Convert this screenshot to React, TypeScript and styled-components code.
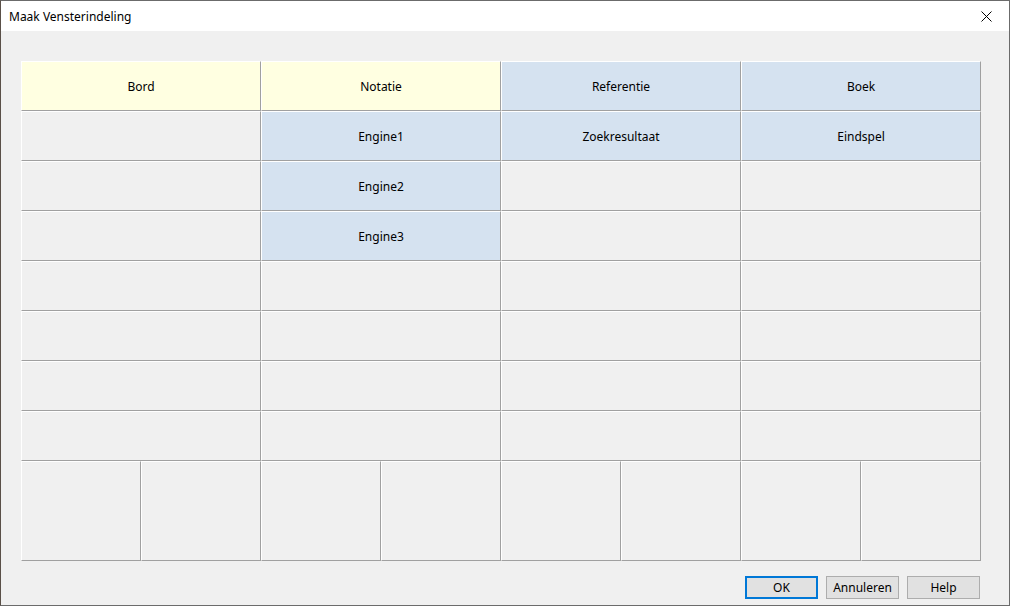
import React from 'react';
import styled, { createGlobalStyle } from 'styled-components';

const GlobalStyle = createGlobalStyle`
    html, body {
        margin: 0;
        padding: 0;
        background: #4f4539;
    }
    body {
        font-family: "Noto Sans", "Liberation Sans", sans-serif;
        font-size: 12px;
        color: #000;
    }
`;

const Window = styled.div`
    width: 1010px;
    height: 606px;
    box-sizing: border-box;
    border: 1px solid #6b6b6b;
    border-left-color: #5a5048;
    background: #f0f0f0;
    display: flex;
    flex-direction: column;
`;

const TitleBar = styled.div`
    height: 30px;
    background: #fff;
    display: flex;
    align-items: center;
    justify-content: space-between;
    padding-left: 8px;
    flex-shrink: 0;
`;

const Title = styled.span`
    font-size: 12px;
    color: #000;
`;

const CloseButton = styled.div`
    width: 46px;
    height: 30px;
    display: flex;
    align-items: center;
    justify-content: center;
`;

const Body = styled.div`
    flex: 1;
    padding: 30px 28px 0 20px;
    display: flex;
    flex-direction: column;
`;

const LayoutGrid = styled.div`
    display: grid;
    grid-template-columns: repeat(8, 120px);
    grid-template-rows: repeat(8, 50px) 100px;
`;

type Tone = 'yellow' | 'blue' | 'grey';

const toneColors: Record<Tone, string> = {
    yellow: '#ffffe1',
    blue: '#d5e2f0',
    grey: '#f0f0f0',
};

const Cell = styled.div<{ $tone: Tone; $span: number }>`
    grid-column: span ${(p) => p.$span};
    box-sizing: border-box;
    border-top: 1px solid #fff;
    border-left: 1px solid #fff;
    border-right: 1px solid #a0a0a0;
    border-bottom: 1px solid #a0a0a0;
    background: ${(p) => toneColors[p.$tone]};
    display: flex;
    align-items: center;
    justify-content: center;
    font-size: 12px;
`;

const Footer = styled.div`
    display: flex;
    justify-content: flex-end;
    gap: 8px;
    padding-top: 15px;
    padding-right: 1px;
`;

const Button = styled.button<{ $primary?: boolean }>`
    width: 73px;
    height: 23px;
    box-sizing: border-box;
    margin: 0;
    padding: 0;
    font-family: "Noto Sans", "Liberation Sans", sans-serif;
    font-size: 12px;
    color: #000;
    background: #e1e1e1;
    border: ${(p) => (p.$primary ? '2px solid #0078d7' : '1px solid #adadad')};
    display: flex;
    align-items: center;
    justify-content: center;
`;

const rows: { label: string; tone: Tone }[][] = [
    [
        { label: 'Bord', tone: 'yellow' },
        { label: 'Notatie', tone: 'yellow' },
        { label: 'Referentie', tone: 'blue' },
        { label: 'Boek', tone: 'blue' },
    ],
    [
        { label: '', tone: 'grey' },
        { label: 'Engine1', tone: 'blue' },
        { label: 'Zoekresultaat', tone: 'blue' },
        { label: 'Eindspel', tone: 'blue' },
    ],
    [
        { label: '', tone: 'grey' },
        { label: 'Engine2', tone: 'blue' },
        { label: '', tone: 'grey' },
        { label: '', tone: 'grey' },
    ],
    [
        { label: '', tone: 'grey' },
        { label: 'Engine3', tone: 'blue' },
        { label: '', tone: 'grey' },
        { label: '', tone: 'grey' },
    ],
];

const emptyRow = Array.from({ length: 4 }, () => ({ label: '', tone: 'grey' as Tone }));
while (rows.length < 8) rows.push(emptyRow);

const App: React.FC = () => {
    return (
        <>
            <GlobalStyle />
            <Window>
                <TitleBar>
                    <Title>Maak Vensterindeling</Title>
                    <CloseButton>
                        <svg width="11" height="11" viewBox="0 0 11 11">
                            <path d="M0.5 0.5 L10.5 10.5 M10.5 0.5 L0.5 10.5" stroke="#000" strokeWidth="1" />
                        </svg>
                    </CloseButton>
                </TitleBar>
                <Body>
                    <LayoutGrid>
                        {rows.map((row, r) =>
                            row.map((c, i) => (
                                <Cell key={`${r}-${i}`} $tone={c.tone} $span={2}>
                                    {c.label}
                                </Cell>
                            ))
                        )}
                        {Array.from({ length: 8 }, (_, i) => (
                            <Cell key={`b-${i}`} $tone="grey" $span={1} />
                        ))}
                    </LayoutGrid>
                    <Footer>
                        <Button $primary>OK</Button>
                        <Button>Annuleren</Button>
                        <Button>Help</Button>
                    </Footer>
                </Body>
            </Window>
        </>
    );
};

export default App;
